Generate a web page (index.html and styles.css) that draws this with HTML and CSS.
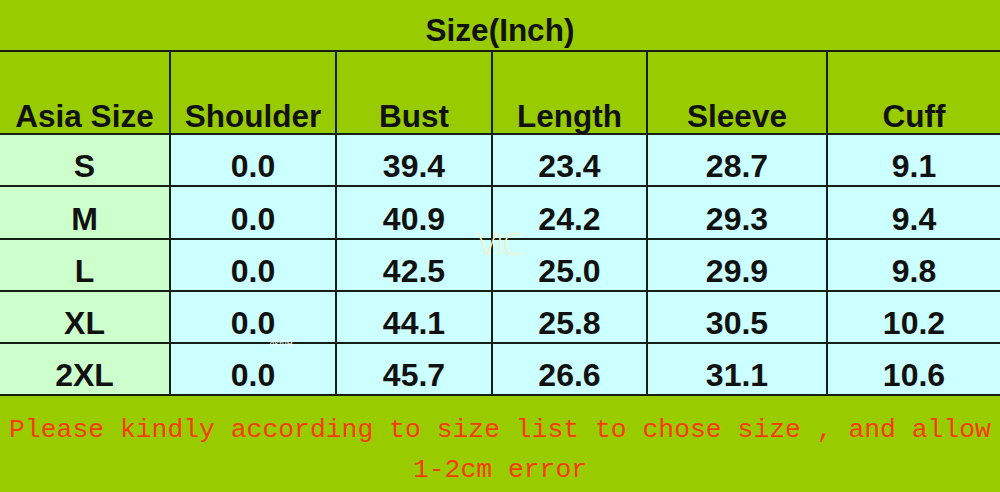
FILE: index.html
```html
<!DOCTYPE html>
<html lang="en">
<head>
<meta charset="utf-8">
<title>Size(Inch)</title>
<link rel="stylesheet" href="styles.css">
</head>
<body>
<div class="chart">
  <div class="title">Size(Inch)</div>

  <div class="cell head">Asia Size</div>
  <div class="cell head">Shoulder</div>
  <div class="cell head">Bust</div>
  <div class="cell head">Length</div>
  <div class="cell head">Sleeve</div>
  <div class="cell head">Cuff</div>

  <div class="cell size">S</div>
  <div class="cell val">0.0</div>
  <div class="cell val">39.4</div>
  <div class="cell val">23.4</div>
  <div class="cell val">28.7</div>
  <div class="cell val">9.1</div>

  <div class="cell size">M</div>
  <div class="cell val">0.0</div>
  <div class="cell val">40.9</div>
  <div class="cell val">24.2</div>
  <div class="cell val">29.3</div>
  <div class="cell val">9.4</div>

  <div class="cell size">L</div>
  <div class="cell val">0.0</div>
  <div class="cell val">42.5</div>
  <div class="cell val">25.0</div>
  <div class="cell val">29.9</div>
  <div class="cell val">9.8</div>

  <div class="cell size">XL</div>
  <div class="cell val">0.0</div>
  <div class="cell val">44.1</div>
  <div class="cell val">25.8</div>
  <div class="cell val">30.5</div>
  <div class="cell val">10.2</div>

  <div class="cell size">2XL</div>
  <div class="cell val">0.0</div>
  <div class="cell val">45.7</div>
  <div class="cell val">26.6</div>
  <div class="cell val">31.1</div>
  <div class="cell val">10.6</div>

  <div class="note">Please kindly according to size list to chose size , and allow<br>1-2cm error</div>

  <span class="mark">VIC</span>
  <span class="tiny">dkf0H</span>
</div>
</body>
</html>
```

FILE: styles.css
```css
html, body {
  margin: 0;
  padding: 0;
  background: #99cc00;
}

.chart {
  position: relative;
  width: 1000px;
  height: 492px;
  display: grid;
  grid-template-columns: 169px 164px 154px 153px 178px 172px;
  grid-template-rows: 50px 81px 50px 51px 50px 50px 50px 96px;
  gap: 2px;
  background: #142014;
  overflow: hidden;
  font-family: "Liberation Sans", Arial, sans-serif;
  font-weight: bold;
  color: #111111;
}

.title {
  grid-column: 1 / -1;
  background: #99cc00;
  text-align: center;
  font-size: 31.5px;
  line-height: 31px;
  padding-top: 15px;
  box-sizing: border-box;
}

.cell {
  display: flex;
  align-items: flex-end;
  justify-content: center;
  font-size: 32px;
  line-height: 32px;
  box-sizing: border-box;
}

.head {
  background: #99cc00;
  font-size: 31.5px;
  line-height: 31px;
  padding-bottom: 1px;
}

.size {
  background: #ccffcc;
  padding-bottom: 3px;
}

.val {
  background: #ccffff;
  padding-bottom: 3px;
}

.note {
  grid-column: 1 / -1;
  background: #99cc00;
  color: #f73a08;
  font-family: "Liberation Mono", "Courier New", monospace;
  font-weight: normal;
  font-size: 26.4px;
  line-height: 40px;
  text-align: center;
  padding-top: 14px;
  box-sizing: border-box;
  white-space: nowrap;
}

.mark {
  position: absolute;
  left: 477px;
  top: 228px;
  font-family: "DejaVu Sans", sans-serif;
  font-weight: 200;
  font-size: 30px;
  line-height: 34px;
  letter-spacing: -2px;
  color: #f6f0c4;
}

.tiny {
  position: absolute;
  left: 270px;
  top: 338px;
  font-family: "Liberation Serif", serif;
  font-weight: normal;
  font-size: 9px;
  line-height: 10px;
  color: #ffffff;
}
```
